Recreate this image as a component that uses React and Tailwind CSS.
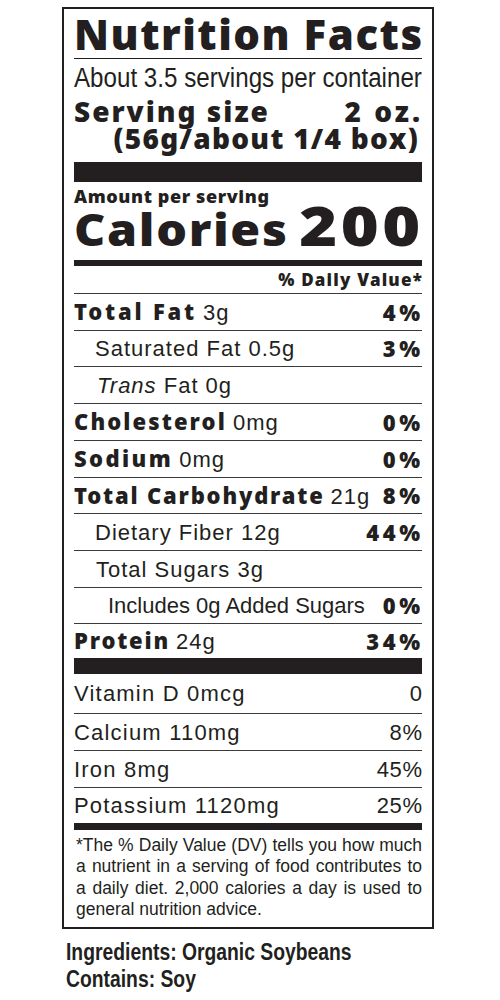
const heavy = "font-['Noto_Sans',sans-serif] font-black";
const plain = "font-['Liberation_Sans',Arial,sans-serif] font-normal";

function Row({ h = "h-[37px]", line = true, indent = "", children, dv }) {
  return (
    <div className={`flex items-center justify-between ${h} ${indent} ${line ? "border-b border-[#3a3a3a]" : ""}`}>
      <div className="whitespace-nowrap">{children}</div>
      {dv && <div className={`${heavy} text-[22px] tracking-[3.5px] mr-[-1.5px]`}>{dv}</div>}
    </div>
  );
}

function Label({ bold, rest, track = "tracking-[1.8px]" }) {
  return (
    <>
      <span className={`${heavy} text-[22px] ${track}`}>{bold}</span>
      <span className={`${plain} text-[22px] tracking-[1px] ml-[6px]`}>{rest}</span>
    </>
  );
}

function Mineral({ h = "h-[37px]", line = true, name, dv }) {
  return (
    <div className={`flex items-center justify-between ${h} ${line ? "border-b border-[#3a3a3a]" : ""} ${plain} text-[22px]`}>
      <span className="tracking-[1.2px]">{name}</span>
      <span className="tracking-[0.6px] mr-[-0.6px]">{dv}</span>
    </div>
  );
}

export default function App() {
  return (
    <div className="w-[500px] h-[1000px] bg-white text-[#231f20] overflow-hidden">
      <div className="ml-[62px] mt-[7px] w-[372px] border-2 border-[#231f20] px-[10px]">
        {/* header */}
        <div className={`h-[50px] border-b border-[#231f20] flex items-center ${heavy} text-[42px] tracking-[1.5px] whitespace-nowrap`}>
          Nutrition Facts
        </div>
        <div className={`h-[38px] flex items-center ${plain} text-[27px] whitespace-nowrap`}>
          <span className="origin-left scale-x-[0.895]">About 3.5 servings per container</span>
        </div>
        <div className={`h-[28px] flex items-center justify-between ${heavy} text-[28px] whitespace-nowrap`}>
          <span className="tracking-[2px]">Serving size</span>
          <span className="tracking-[3px] mr-[-1px]">2 oz.</span>
        </div>
        <div className={`h-[26px] flex items-center justify-end pr-[3px] ${heavy} text-[28px] tracking-[1.3px] whitespace-nowrap`}>
          (56g/about 1/4 box)
        </div>
        <div className="mt-[11px] h-[20px] bg-[#231f20]" />

        {/* calories */}
        <div className={`h-[29px] flex items-center ${heavy} text-[18px] tracking-[0.6px]`}>Amount per serving</div>
        <div className={`h-[49px] flex items-baseline justify-between ${heavy} whitespace-nowrap`}>
          <span className="text-[44px] leading-[28px] tracking-[1.5px] origin-left scale-x-[1.1]">Calories</span>
          <span className="text-[54px] leading-[28px] tracking-[3px] mr-[-2px] origin-right scale-x-[1.2]">200</span>
        </div>
        <div className="h-[6px] bg-[#231f20]" />
        <div className={`h-[28px] border-b border-[#3a3a3a] flex items-center justify-end ${heavy} text-[17px] tracking-[1.2px]`}>
          <span className="mr-[-1px]">% Daily Value*</span>
        </div>

        {/* nutrients */}
        <Row dv="4%"><Label bold="Total Fat" rest="3g" track="tracking-[2.8px]" /></Row>
        <Row h="h-[36px]" indent="pl-[21px]" dv="3%">
          <span className={`${plain} text-[22px] tracking-[1px]`}>Saturated Fat 0.5g</span>
        </Row>
        <Row indent="pl-[23px]">
          <span className={`${plain} text-[22px] tracking-[1px]`}><i>Trans</i> Fat 0g</span>
        </Row>
        <Row dv="0%"><Label bold="Cholesterol" rest="0mg" track="tracking-[2.1px]" /></Row>
        <Row dv="0%"><Label bold="Sodium" rest="0mg" track="tracking-[2.4px]" /></Row>
        <Row h="h-[36px]" dv="8%"><Label bold="Total Carbohydrate" rest="21g" /></Row>
        <Row indent="pl-[21px]" dv="44%">
          <span className={`${plain} text-[22px] tracking-[1px]`}>Dietary Fiber 12g</span>
        </Row>
        <Row indent="pl-[22px]">
          <span className={`${plain} text-[22px] tracking-[1px]`}>Total Sugars 3g</span>
        </Row>
        <Row h="h-[36px]" indent="pl-[34px]" dv="0%">
          <span className={`${plain} text-[22px]`}>Includes 0g Added Sugars</span>
        </Row>
        <Row h="h-[34px]" line={false} dv="34%"><Label bold="Protein" rest="24g" /></Row>
        <div className="h-[16px] bg-[#231f20]" />

        {/* vitamins & minerals */}
        <Mineral h="h-[40px]" name="Vitamin D 0mcg" dv="0" />
        <Mineral name="Calcium 110mg" dv="8%" />
        <Mineral name="Iron 8mg" dv="45%" />
        <Mineral h="h-[35px]" line={false} name="Potassium 1120mg" dv="25%" />
        <div className="h-[7px] bg-[#231f20]" />

        {/* footnote */}
        <div className={`h-[97px] pt-[5px] pl-[2px] ${plain} text-[17.5px] leading-[21.3px]`}>
          <div className="[text-align-last:justify] whitespace-nowrap">*The % Daily Value (DV) tells you how much</div>
          <div className="[text-align-last:justify] whitespace-nowrap">a nutrient in a serving of food contributes to</div>
          <div className="[text-align-last:justify] whitespace-nowrap">a daily diet. 2,000 calories a day is used to</div>
          <div>general nutrition advice.</div>
        </div>
      </div>

      <div className="ml-[66px] mt-[10px] font-['Liberation_Sans',Arial,sans-serif] font-bold text-[23px] leading-[27px] whitespace-nowrap">
        <div className="origin-left scale-x-[0.84]">Ingredients: Organic Soybeans</div>
        <div className="origin-left scale-x-[0.84]">Contains: Soy</div>
      </div>
    </div>
  );
}
